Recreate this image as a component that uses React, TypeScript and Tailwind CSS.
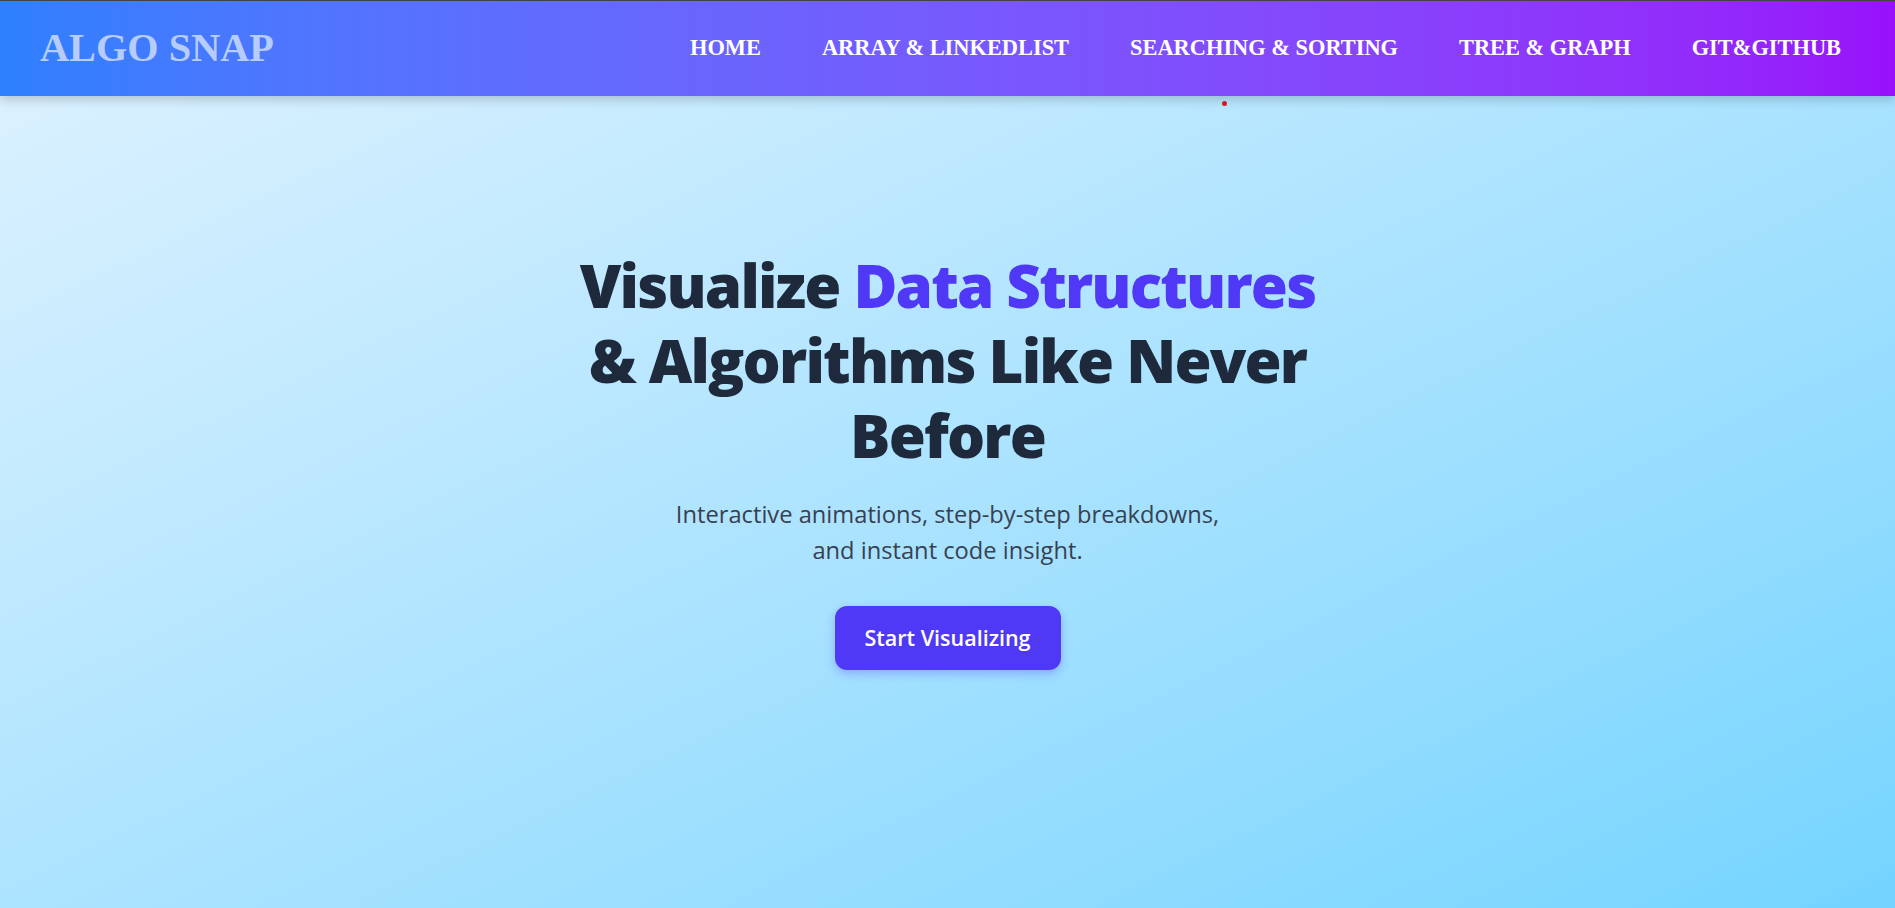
import React from "react";

const navItems = ["HOME", "ARRAY & LINKEDLIST", "SEARCHING & SORTING", "TREE & GRAPH", "GIT&GITHUB"];

export default function App() {
  return (
    <div className="relative min-h-[908px] w-full bg-gradient-to-br from-sky-100 to-sky-300 font-['Open_Sans',sans-serif]">
      <header className="relative z-10 flex h-[96px] items-center justify-between border-t border-[#444] bg-gradient-to-r from-[#2d80ff] to-[#9810fa] pl-[40px] pr-[54px] shadow-[0_4px_10px_rgba(0,0,0,0.18)]">
        <div className="font-['Liberation_Serif',serif] text-[40.3px] font-bold leading-none text-[#b6ccfb]">ALGO SNAP</div>
        <nav className="flex items-center gap-[61px]">
          {navItems.map((item) => (
            <a key={item} className="font-['Liberation_Serif',serif] text-[22.4px] font-bold leading-none text-white">
              {item}
            </a>
          ))}
        </nav>
      </header>
      <span className="absolute left-[1222px] top-[101px] h-[5px] w-[5px] rounded-full bg-[#e8141c]" />
      <main className="flex flex-col items-center pt-[152px] text-center">
        <h1 className="max-w-[770px] text-[60px] font-extrabold leading-[1.25] tracking-[-0.03em] text-[#1e293b]">
          Visualize <span className="text-[#4f39f6]">Data Structures</span> &amp; Algorithms Like Never Before
        </h1>
        <p className="mt-[23px] max-w-[560px] text-[23.7px] leading-[36px] text-[#374151]">
          Interactive animations, step-by-step breakdowns, and instant code insight.
        </p>
        <button className="mt-[38px] h-[64px] rounded-xl bg-[#4f39f6] px-[30px] text-[21.5px] font-semibold text-white shadow-[0_4px_10px_rgba(79,57,246,0.3)]">
          Start Visualizing
        </button>
      </main>
    </div>
  );
}
